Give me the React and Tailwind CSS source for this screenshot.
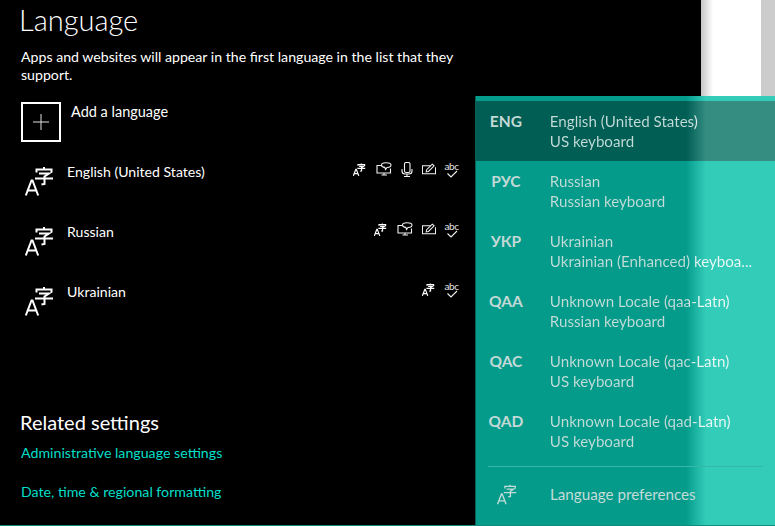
const font = { fontFamily: '"Lato", "Noto Sans", sans-serif' };

function LangGlyph({ className = "w-[32px] h-[32px]", stroke = "#fff", weight = 2 }) {
  return (
    <svg viewBox="0 0 32 32" className={className} fill="none" stroke={stroke} strokeWidth={weight}>
      <path d="M.8 29.5 L6.5 14.5 H7.5 L13.2 29.5 M3 24.5 H11" />
      <path d="M11.5 6.5 V3.5 H26.5 V6.5 M19 1 V3.5 M14 7.5 H24 L19.5 10.5 V18 L16.5 18.5 M10 12.5 H28" />
    </svg>
  );
}

const ic = { fill: "none", stroke: "#f2f2f2", strokeWidth: 1.1 };
function ITranslate() { return <LangGlyph className="w-[14px] h-[14px] mt-[1px]" stroke="#ffffff" weight={2.8} />; }
function ISpeech() {
  return (
    <svg viewBox="0 0 16 14" className="w-[16px] h-[14px]" {...ic}>
      <path d="M5 3.5 H1 V11 H14.5 V6.5 M5.5 13 H11 M8 11 V13" />
      <path d="M5.5 3 Q5.5 .8 9.8 .8 Q15 .8 15 3 Q15 5.5 11 5.5 L9.5 7.5 L8.8 5.4 Q5.5 5.2 5.5 3 Z" />
    </svg>
  );
}
function IMic() {
  return (
    <svg viewBox="0 0 12 15" className="w-[12px] h-[15px]" {...ic}>
      <rect x="3.5" y=".5" width="5.5" height="10" rx="1.5" />
      <path d="M1 7 V9 Q1 12 4 12 H8 Q11 12 11 9 V7 M6 12 V14 M3 14.5 H9" />
    </svg>
  );
}
function IPen() {
  return (
    <svg viewBox="0 0 15 12" className="w-[14px] h-[12px] mt-[1px]" {...ic}>
      <path d="M9.5 2.5 H.5 V11 H14.5 V4" />
      <path d="M4.5 9 L5 6.8 L11 .8 L13 2.6 L7 8.6 Z" />
    </svg>
  );
}
function ISpell() {
  return (
    <span className="relative flex flex-col items-center w-[13px] h-[16px]">
      <span className="text-[10px] leading-[8px] text-[#e6e6e6] tracking-[-0.4px]">abc</span>
      <svg viewBox="0 0 12 8" className="w-[12px] h-[8px]" {...ic}>
        <path d="M1.5 3.5 L5 7 L11 1" />
      </svg>
    </span>
  );
}

function LangRow({ name, children }) {
  return (
    <div className="flex h-[60px]">
      <div className="pl-[25px] pt-[13px] w-[67px] shrink-0">
        <LangGlyph />
      </div>
      <div className="flex-1 text-[14.1px] leading-[20px] pt-[9px] text-white">{name}</div>
      <div className="flex items-start gap-[9px] pt-[9px]">{children}</div>
    </div>
  );
}

const flyoutRows = [
  ["ENG", "English (United States)", "US keyboard"],
  ["РУС", "Russian", "Russian keyboard"],
  ["УКР", "Ukrainian", "Ukrainian (Enhanced) keyboa..."],
  ["QAA", "Unknown Locale (qaa-Latn)", "Russian keyboard"],
  ["QAC", "Unknown Locale (qac-Latn)", "US keyboard"],
  ["QAD", "Unknown Locale (qad-Latn)", "US keyboard"],
];

export default function App() {
  return (
    <div className="relative flex w-[775px] h-[526px] overflow-hidden bg-black" style={font}>
      <main className="w-[701px] shrink-0 bg-black text-white pl-[21px] flex flex-col">
        <h1 className="text-[29px] leading-[34px] font-light -ml-[2px] pt-[3px]">Language</h1>
        <p className="text-[14.15px] leading-[18px] w-[440px] mt-[11px]">
          Apps and websites will appear in the first language in the list that they support.
        </p>
        <div className="flex mt-[18px] h-[51px]">
          <div className="w-[40px] h-[40px] border-2 border-white flex items-center justify-center">
            <svg viewBox="0 0 16 16" className="w-[16px] h-[16px]" fill="none" stroke="#e0e0e0" strokeWidth="1">
              <path d="M8 0 V16 M0 8 H16" />
            </svg>
          </div>
          <div className="text-[14.5px] leading-[20px] ml-[10px]">Add a language</div>
        </div>
        <div className="-ml-[21px] w-[458px]">
          <LangRow name="English (United States)">
            <ITranslate /><ISpeech /><IMic /><IPen /><ISpell />
          </LangRow>
          <LangRow name="Russian">
            <ITranslate /><ISpeech /><IPen /><ISpell />
          </LangRow>
          <LangRow name="Ukrainian">
            <ITranslate /><ISpell />
          </LangRow>
        </div>
        <h2 className="text-[20px] leading-[26px] -ml-[1px] mt-[76px]">Related settings</h2>
        <a className="text-[14.2px] leading-[20px] text-[#00dfc9] mt-[8px]">Administrative language settings</a>
        <a className="text-[14.2px] leading-[20px] text-[#00dfc9] mt-[19px]">Date, time &amp; regional formatting</a>
      </main>
      <div className="w-[60px] shrink-0 bg-[linear-gradient(90deg,#c4c4c4_0,#fff_12px)]" />
      <div className="flex-1 bg-[#cccccc]" />

      <aside className="absolute left-[475px] top-[96px] w-[300px] h-[430px] border-l border-[#0b5f57] pt-[5px] bg-[linear-gradient(90deg,#049b8b_210px,#33ccb8_230px)]">
        {flyoutRows.map(([code, a, b], i) => (
          <div
            key={code}
            className={
              i === 0
                ? "flex h-[60px] bg-[linear-gradient(90deg,#005e55_210px,#358c80_230px)]"
                : "flex h-[60px]"
            }
          >
            <div className="w-[60px] pt-[10px] text-center text-[15.5px] leading-[20px] font-bold text-[#c3d9d6]">
              {code}
            </div>
            <div className="ml-[14px] pt-[10px] text-[15.15px] leading-[20px] whitespace-nowrap bg-[linear-gradient(90deg,#c3dcd8_137px,#eef8f6_152px)] bg-clip-text text-transparent w-[226px]">
              <div>{a}</div>
              <div>{b}</div>
            </div>
          </div>
        ))}
        <div className="mx-[12px] mt-[5px] w-[275px] border-t border-[#33b9a9]" />
        <div className="flex h-[54px] items-start">
          <div className="w-[74px] pl-[21px] pt-[17px]">
            <LangGlyph className="w-[22px] h-[22px]" stroke="#c3dcd8" />
          </div>
          <div className="pt-[17px] text-[15.2px] leading-[20px] text-[#c3dcd8]">Language preferences</div>
        </div>
      </aside>
      <div className="absolute left-0 bottom-0 w-full h-px bg-[#128b7e]" />
    </div>
  );
}
